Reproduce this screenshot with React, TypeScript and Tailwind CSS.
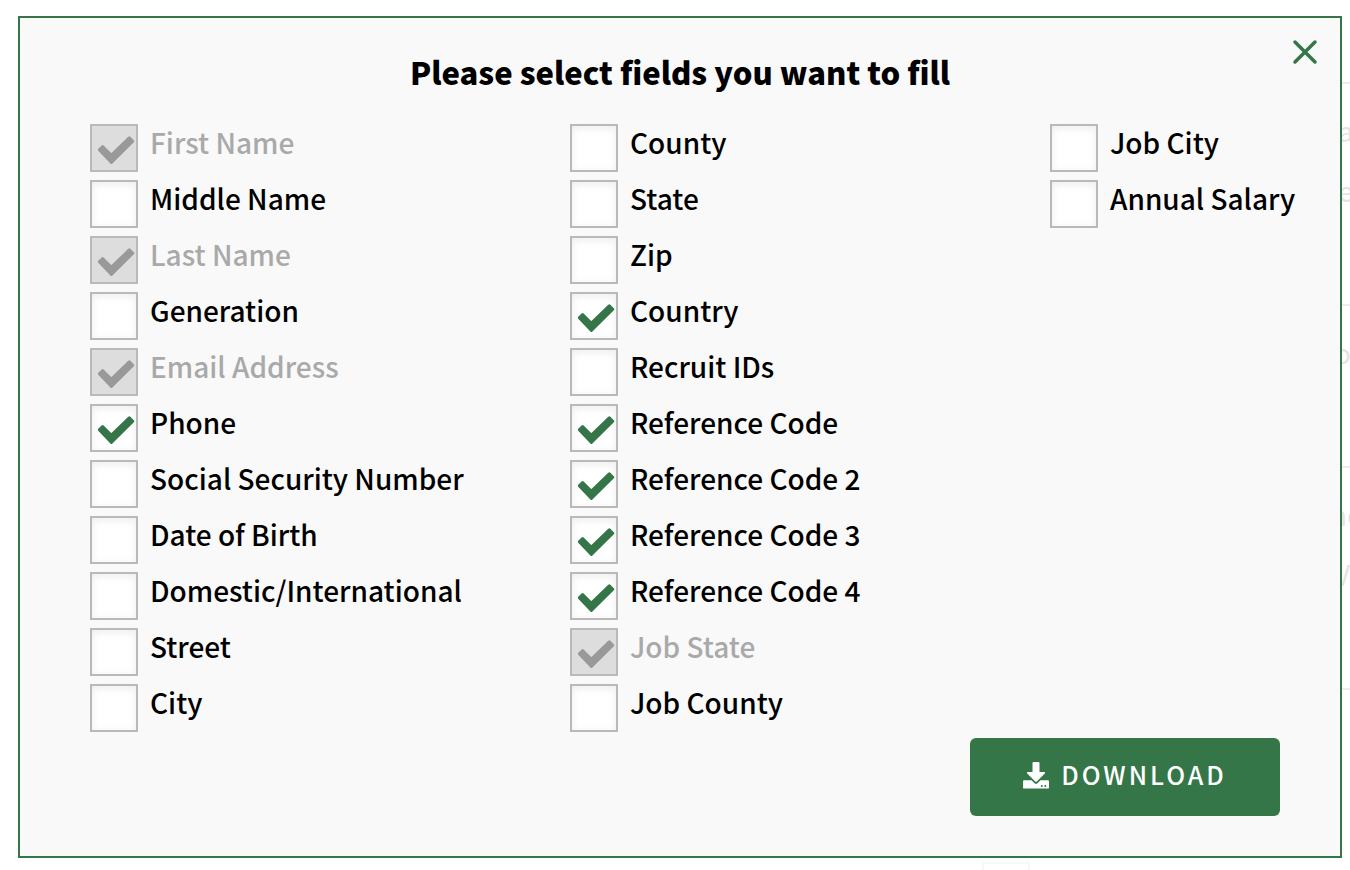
import { useState } from 'react';

interface Field {
  label: string;
  checked?: boolean;
  locked?: boolean;
}

const columns: Field[][] = [
  [
    { label: 'First Name', checked: true, locked: true },
    { label: 'Middle Name' },
    { label: 'Last Name', checked: true, locked: true },
    { label: 'Generation' },
    { label: 'Email Address', checked: true, locked: true },
    { label: 'Phone', checked: true },
    { label: 'Social Security Number' },
    { label: 'Date of Birth' },
    { label: 'Domestic/International' },
    { label: 'Street' },
    { label: 'City' },
  ],
  [
    { label: 'County' },
    { label: 'State' },
    { label: 'Zip' },
    { label: 'Country', checked: true },
    { label: 'Recruit IDs' },
    { label: 'Reference Code', checked: true },
    { label: 'Reference Code 2', checked: true },
    { label: 'Reference Code 3', checked: true },
    { label: 'Reference Code 4', checked: true },
    { label: 'Job State', checked: true, locked: true },
    { label: 'Job County' },
  ],
  [{ label: 'Job City' }, { label: 'Annual Salary' }],
];

function FieldCheckbox({ field }: { field: Field }) {
  const [checked, setChecked] = useState(!!field.checked);

  return (
    <label className={`flex gap-3 ${field.locked ? 'text-[#a9a9a9]' : 'text-black cursor-pointer'}`}>
      <span className="relative shrink-0 size-12">
        <input
          type="checkbox"
          checked={checked}
          disabled={field.locked}
          onChange={(e) => setChecked(e.target.checked)}
          className="block size-12 appearance-none border-2 border-[#b9b9b9] bg-white shadow-[inset_0_2px_8px_rgba(0,0,0,0.08)] disabled:bg-[#dddddd] disabled:shadow-none"
        />
        {checked && (
          <svg
            viewBox="0 0 48 48"
            className={`absolute inset-0 size-12 pointer-events-none ${field.locked ? 'text-[#999999]' : 'text-[#347648]'}`}
            fill="currentColor"
            stroke="currentColor"
            strokeWidth="3"
            strokeLinejoin="round"
          >
            <path d="M9.3 25.8 12.6 22.5 21.4 31.2 39.3 13.9 42.8 17.3 21.4 38.4Z" />
          </svg>
        )}
      </span>
      <span className="h-9 text-[28px] leading-9 font-medium whitespace-nowrap">{field.label}</span>
    </label>
  );
}

function DownloadIcon() {
  return (
    <svg viewBox="0 0 26 27" className="w-[26px] h-[27px] shrink-0" fill="currentColor">
      <path d="M10.5 0h5a1 1 0 0 1 1 1v9h4.7c.9 0 1.2.9.6 1.5l-8 8.1a1.1 1.1 0 0 1-1.6 0l-8-8.1c-.6-.6-.3-1.5.6-1.5h4.7V1a1 1 0 0 1 1-1Z" />
      <path
        fillRule="evenodd"
        d="M1.2 18.2h7.4l2.7 2.7a2.4 2.4 0 0 0 3.4 0l2.7-2.7h7.4a1.2 1.2 0 0 1 1.2 1.2v6a1.2 1.2 0 0 1-1.2 1.2H1.2A1.2 1.2 0 0 1 0 25.4v-6a1.2 1.2 0 0 1 1.2-1.2ZM18.8 23a1 1 0 1 0 0 2 1 1 0 0 0 0-2Zm3.5 0a1 1 0 1 0 0 2 1 1 0 0 0 0-2Z"
      />
    </svg>
  );
}

/* Sliver of the dimmed page that shows past the dialog's right edge */
function PageEdge() {
  return (
    <div
      aria-hidden="true"
      className="flex flex-col w-2 shrink-0 overflow-hidden pt-[66px] text-[28px] leading-[60px] text-[#e4e4e4]"
    >
      <div className="h-[222px] border-t-2 border-[#e9efed] pt-4">
        <p className="-ml-1">a</p>
        <p className="-ml-1">e</p>
      </div>
      <div className="h-[162px] border-t-2 border-[#e9efed] pt-4">
        <p className="-ml-2">o</p>
      </div>
      <div className="h-[222px] border-t-2 border-[#e9efed] pt-4">
        <p className="-ml-3">ne</p>
        <p className="-ml-2">V</p>
      </div>
      <div className="border-t-2 border-[#e9efed]" />
    </div>
  );
}

export default function App() {
  return (
    <div className="min-h-screen overflow-hidden bg-white pt-4 font-['Noto_Sans_CJK_SC','Open_Sans',sans-serif]">
      <div className="flex pl-[18px]">
        <section
          role="dialog"
          aria-labelledby="dialog-title"
          className="relative flex-1 min-w-0 border-2 border-[#347648] bg-[#f9f9f9] pt-8 pb-10"
        >
          <button
            type="button"
            aria-label="Close"
            className="absolute top-5 right-[21px] flex size-7 items-center justify-center text-[#347648] cursor-pointer"
          >
            <svg viewBox="0 0 28 28" className="size-7" stroke="currentColor" strokeWidth="3.5" strokeLinecap="round">
              <path d="M4 4 24 24M24 4 4 24" />
            </svg>
          </button>

          <h1 id="dialog-title" className="text-center text-[31px] leading-[44px] font-black text-black">
            Please select fields you want to fill
          </h1>

          <div className="mt-[30px] grid grid-cols-[1fr_1fr_244px] pl-[70px] pr-[46px]">
            {columns.map((fields, i) => (
              <div key={i} className="flex flex-col gap-2">
                {fields.map((field) => (
                  <FieldCheckbox key={field.label} field={field} />
                ))}
              </div>
            ))}
          </div>

          <div className="mt-[6px] flex justify-end pr-[60px]">
            <button
              type="button"
              className="flex h-[78px] w-[310px] items-center justify-center gap-3 rounded-md bg-[#347648] pb-1 text-[25px] font-medium tracking-[3px] text-white cursor-pointer"
            >
              <DownloadIcon />
              <span>DOWNLOAD</span>
            </button>
          </div>
        </section>
        <PageEdge />
      </div>

      <div aria-hidden="true" className="mt-1 flex justify-end pr-80">
        <div className="h-2 w-12 border-2 border-b-0 border-[#f7f7f7]" />
      </div>
    </div>
  );
}
